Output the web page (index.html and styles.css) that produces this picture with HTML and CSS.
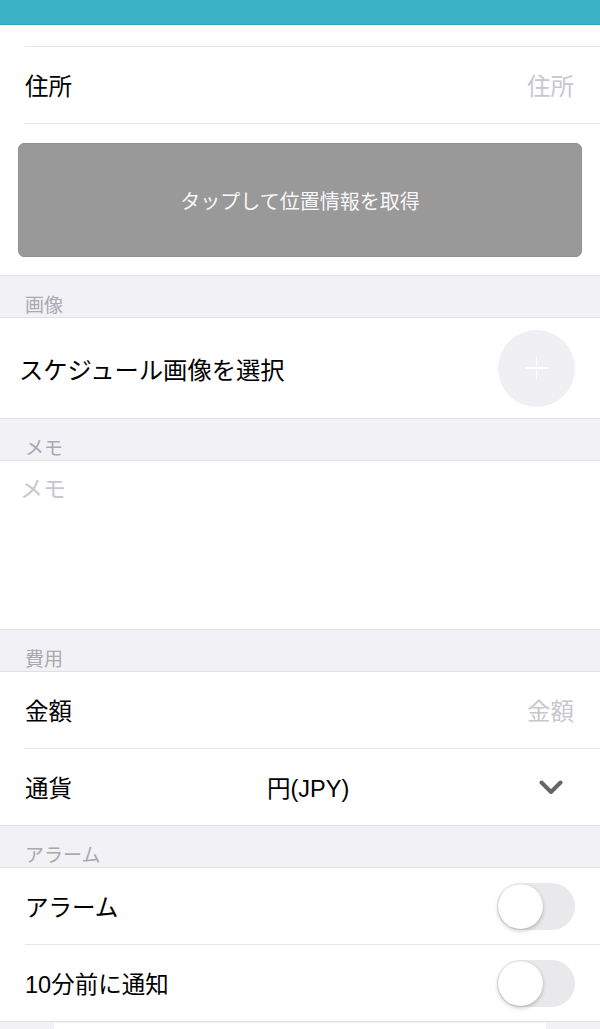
FILE: index.html
```html
<!DOCTYPE html>
<html lang="ja">
<head>
    <meta charset="UTF-8">
    <meta name="viewport" content="width=device-width, initial-scale=1.0">
    <title>スケジュール編集</title>
    <link rel="stylesheet" href="styles.css">
</head>
<body>

    <!-- Navigation bar (scrolled off) -->
    <div class="topbar"></div>

    <!-- Place -->
    <div class="group group-first">
        <div class="cell cell-stub"></div>
        <div class="cell">
            <span class="cell-label">住所</span>
            <span class="cell-placeholder">住所</span>
        </div>
        <div class="button-wrap">
            <button type="button" class="locate-btn">タップして位置情報を取得</button>
        </div>
    </div>

    <!-- Image -->
    <div class="section-title">画像</div>
    <div class="group">
        <div class="image-row">
            <span class="image-label">スケジュール画像を選択</span>
            <span class="add-circle"><span class="plus"></span></span>
        </div>
    </div>

    <!-- Memo -->
    <div class="section-title">メモ</div>
    <div class="group">
        <div class="memo">
            <span class="memo-placeholder">メモ</span>
        </div>
    </div>

    <!-- Cost -->
    <div class="section-title">費用</div>
    <div class="group">
        <div class="cell">
            <span class="cell-label">金額</span>
            <span class="cell-placeholder">金額</span>
        </div>
        <div class="cell cell-last currency">
            <span class="cell-label">通貨</span>
            <span class="currency-value">円(JPY)</span>
            <svg class="chevron" width="24" height="15" viewBox="0 0 24 15">
                <polyline points="2.5,2.5 12,12 21.5,2.5" fill="none" stroke="#666" stroke-width="4" stroke-linecap="round" stroke-linejoin="round"/>
            </svg>
        </div>
    </div>

    <!-- Alarm -->
    <div class="section-title">アラーム</div>
    <div class="group">
        <div class="cell">
            <span class="cell-label">アラーム</span>
            <span class="switch"><span class="knob"></span></span>
        </div>
        <div class="cell cell-last">
            <span class="cell-label latin">10分前に通知</span>
            <span class="switch"><span class="knob"></span></span>
        </div>
    </div>

    <div class="footer">
        <div class="footer-card"></div>
    </div>

</body>
</html>
```

FILE: styles.css
```css
body {
    margin: 0;
    font-family: "Noto Sans CJK JP", "Noto Sans", sans-serif;
    background-color: #f1f1f6;
    color: #000;
}

.topbar {
    height: 24px;
    background-color: #3ab3c6;
    border-bottom: 1px solid #2ea7ba;
}

.group {
    background: #fff;
    border-top: 1px solid #e1e1e5;
    border-bottom: 1px solid #e1e1e5;
}

.group-first {
    border-top: none;
}

.cell {
    height: 76px;
    margin-left: 25px;
    padding-right: 25px;
    border-bottom: 1px solid #e6e6e6;
    display: flex;
    align-items: center;
    justify-content: space-between;
    font-size: 23.5px;
}

.cell-stub {
    height: 21px;
}

.cell-last {
    border-bottom: none;
}

.cell-placeholder {
    color: #c7c7cd;
    margin-right: 1px;
}

.latin {
    font-family: "Liberation Sans", "Noto Sans CJK JP", sans-serif;
}

.button-wrap {
    padding: 19px 18px 18px;
}

.locate-btn {
    display: block;
    width: 100%;
    height: 114px;
    background-color: #999999;
    border: 1px solid #929292;
    border-radius: 6px;
    color: #f7f7f7;
    font-family: inherit;
    font-size: 20px;
    padding: 0;
}

.section-title {
    height: 41px;
    box-sizing: border-box;
    padding: 17px 25px 0;
    font-size: 19px;
    line-height: 22px;
    color: #a9a9ae;
}

.image-row {
    height: 100px;
    padding: 0 25px 0 19px;
    display: flex;
    align-items: center;
    justify-content: space-between;
    font-size: 24.3px;
}

.add-circle {
    width: 77px;
    height: 77px;
    border-radius: 50%;
    background-color: #efeff4;
    display: flex;
    align-items: center;
    justify-content: center;
}

.plus {
    position: relative;
    width: 22px;
    height: 22px;
}

.plus::before, .plus::after {
    content: "";
    position: absolute;
    background: #fff;
}

.plus::before {
    left: 0;
    right: 0;
    top: 10px;
    height: 1.5px;
}

.plus::after {
    top: 0;
    bottom: 0;
    left: 10px;
    width: 1.5px;
}

.memo {
    height: 168px;
    box-sizing: border-box;
    padding: 11px 20px 0 20px;
    font-size: 23px;
    line-height: 30px;
}

.memo-placeholder {
    color: #c7c7cd;
}

.currency {
    display: grid;
    grid-template-columns: 242px 1fr auto;
    padding-right: 37px;
}

.currency-value {
    font-family: "Liberation Sans", "Noto Sans CJK JP", sans-serif;
    font-size: 23.5px;
}

.switch {
    width: 78px;
    height: 47px;
    border-radius: 24px;
    background-color: #e9e9eb;
    display: flex;
    align-items: center;
}

.knob {
    width: 45px;
    height: 45px;
    border-radius: 50%;
    background: #fff;
    margin-left: 1px;
    box-shadow: 0 2px 4px rgba(0, 0, 0, 0.22), 0 0 1px rgba(0, 0, 0, 0.15);
}

.footer {
    padding-top: 1px;
}

.footer-card {
    margin: 0 54px;
    height: 20px;
    background: #fff;
}
```
